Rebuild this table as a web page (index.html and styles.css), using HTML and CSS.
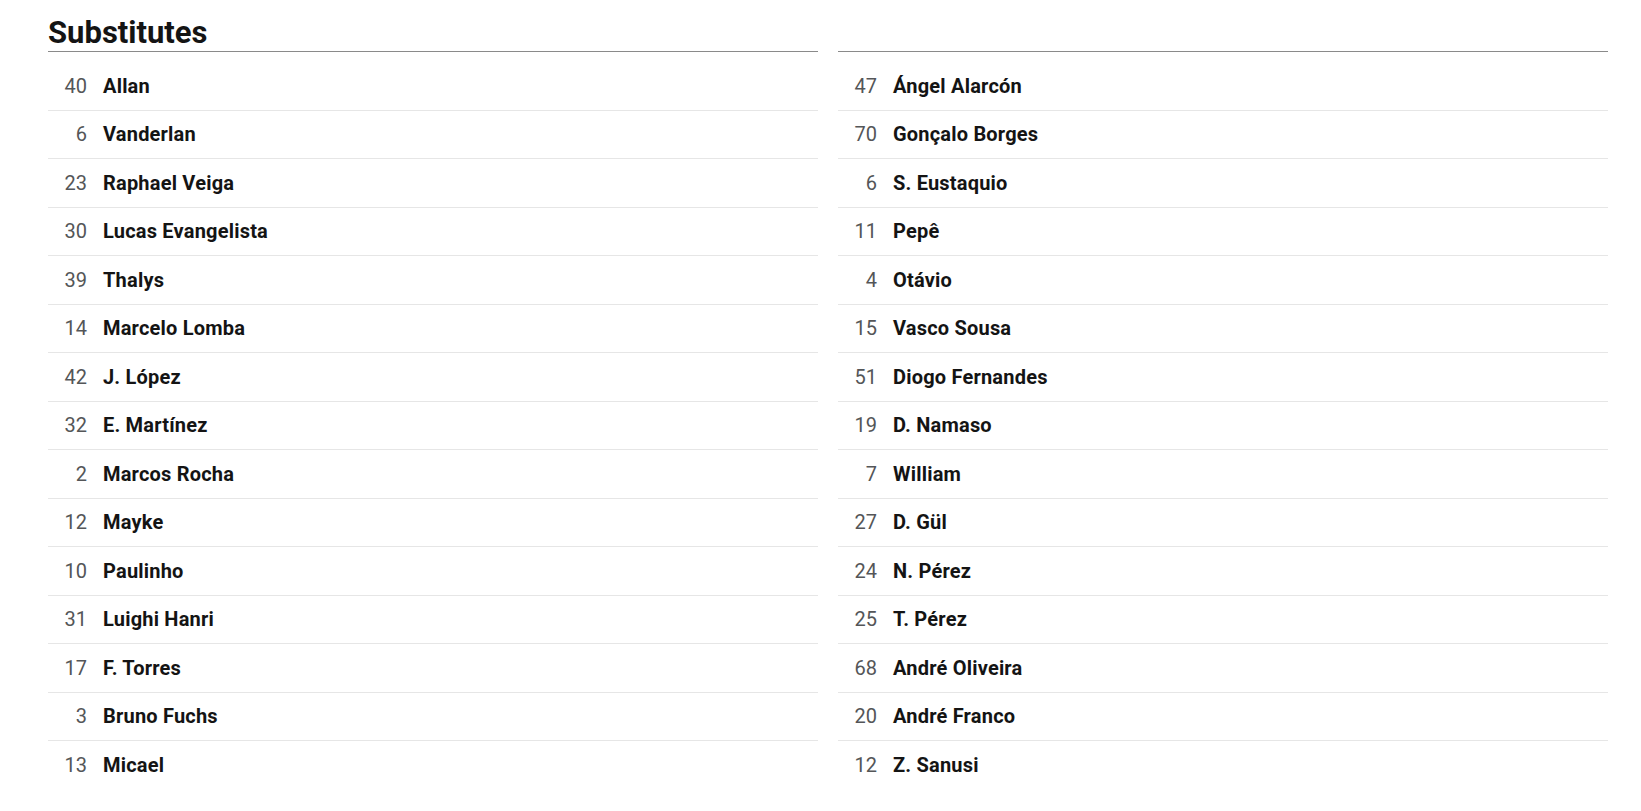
FILE: index.html
```html
<!DOCTYPE html>
<html lang="en">
<head>
<meta charset="utf-8">
<title>Substitutes</title>
<link rel="stylesheet" href="styles.css">
</head>
<body>
<section class="subs">
  <div class="team">
    <h2 class="team-heading">Substitutes</h2>
    <ul class="player-list">
      <li class="player"><span class="num">40</span><span class="name">Allan</span></li>
      <li class="player"><span class="num">6</span><span class="name">Vanderlan</span></li>
      <li class="player"><span class="num">23</span><span class="name">Raphael Veiga</span></li>
      <li class="player"><span class="num">30</span><span class="name">Lucas Evangelista</span></li>
      <li class="player"><span class="num">39</span><span class="name">Thalys</span></li>
      <li class="player"><span class="num">14</span><span class="name">Marcelo Lomba</span></li>
      <li class="player"><span class="num">42</span><span class="name">J. López</span></li>
      <li class="player"><span class="num">32</span><span class="name">E. Martínez</span></li>
      <li class="player"><span class="num">2</span><span class="name">Marcos Rocha</span></li>
      <li class="player"><span class="num">12</span><span class="name">Mayke</span></li>
      <li class="player"><span class="num">10</span><span class="name">Paulinho</span></li>
      <li class="player"><span class="num">31</span><span class="name">Luighi Hanri</span></li>
      <li class="player"><span class="num">17</span><span class="name">F. Torres</span></li>
      <li class="player"><span class="num">3</span><span class="name">Bruno Fuchs</span></li>
      <li class="player"><span class="num">13</span><span class="name">Micael</span></li>
    </ul>
  </div>
  <div class="team">
    <h2 class="team-heading team-heading--empty"></h2>
    <ul class="player-list">
      <li class="player"><span class="num">47</span><span class="name">Ángel Alarcón</span></li>
      <li class="player"><span class="num">70</span><span class="name">Gonçalo Borges</span></li>
      <li class="player"><span class="num">6</span><span class="name">S. Eustaquio</span></li>
      <li class="player"><span class="num">11</span><span class="name">Pepê</span></li>
      <li class="player"><span class="num">4</span><span class="name">Otávio</span></li>
      <li class="player"><span class="num">15</span><span class="name">Vasco Sousa</span></li>
      <li class="player"><span class="num">51</span><span class="name">Diogo Fernandes</span></li>
      <li class="player"><span class="num">19</span><span class="name">D. Namaso</span></li>
      <li class="player"><span class="num">7</span><span class="name">William</span></li>
      <li class="player"><span class="num">27</span><span class="name">D. Gül</span></li>
      <li class="player"><span class="num">24</span><span class="name">N. Pérez</span></li>
      <li class="player"><span class="num">25</span><span class="name">T. Pérez</span></li>
      <li class="player"><span class="num">68</span><span class="name">André Oliveira</span></li>
      <li class="player"><span class="num">20</span><span class="name">André Franco</span></li>
      <li class="player"><span class="num">12</span><span class="name">Z. Sanusi</span></li>
    </ul>
  </div>
</section>
</body>
</html>
```
FILE: styles.css
```css
html, body {
  margin: 0;
  padding: 0;
  background: #ffffff;
}

body {
  font-family: Roboto, "Liberation Sans", sans-serif;
  color: #141414;
}

.subs {
  display: grid;
  grid-template-columns: 770px 770px;
  column-gap: 20px;
  padding: 15px 33px 0 48px;
}

.team-heading {
  margin: 0;
  height: 36px;
  font-size: 31px;
  line-height: 36px;
  font-weight: 700;
  color: #141414;
  border-bottom: 1px solid #8a8a8a;
}

.player-list {
  list-style: none;
  margin: 0;
  padding: 10px 0 0 0;
}

.player {
  display: flex;
  align-items: center;
  height: 47.5px;
  border-bottom: 1px solid #e6e6e6;
}

.player:last-child {
  border-bottom: none;
}

.num {
  width: 39px;
  flex: none;
  text-align: right;
  font-size: 20px;
  line-height: 24px;
  font-weight: 400;
  color: #545658;
}

.name {
  margin-left: 16px;
  font-size: 20px;
  line-height: 24px;
  font-weight: 700;
  letter-spacing: 0.2px;
  color: #141414;
}
```
